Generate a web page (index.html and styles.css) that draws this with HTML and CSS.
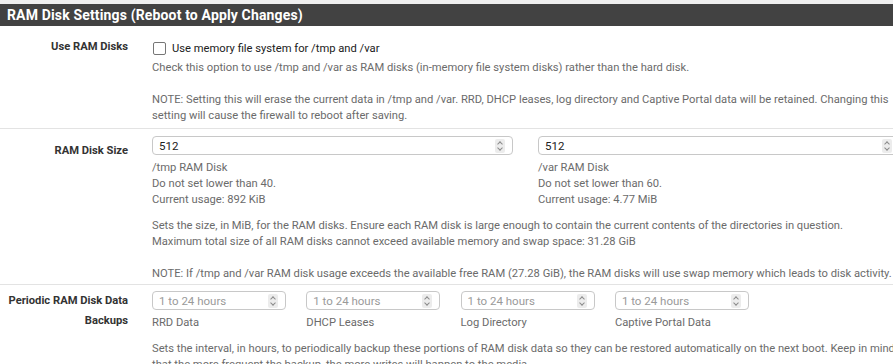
FILE: index.html
```html
<!DOCTYPE html>
<html lang="en">
<head>
  <meta charset="UTF-8" />
  <title>RAM Disk Settings</title>
  <link rel="stylesheet" href="styles.css">
</head>
<body>

  <div class="panel">
    <h2 class="panel-title">RAM Disk Settings (Reboot to Apply Changes)</h2>

    <div class="form-row first">
      <div class="form-label">Use RAM Disks</div>
      <div class="form-field">
        <label class="check"><span class="check-box"></span>Use memory file system for /tmp and /var</label>
        <p class="help">Check this option to use /tmp and /var as RAM disks (in-memory file system disks) rather than the hard disk.<br><br>NOTE: Setting this will erase the current data in /tmp and /var. RRD, DHCP leases, log directory and Captive Portal data will be retained. Changing this setting will cause the firewall to reboot after saving.</p>
      </div>
    </div>

    <div class="form-row sizes">
      <div class="form-label">RAM Disk Size</div>
      <div class="form-field">
        <div class="size-grid">
          <div>
            <div class="num-input"><span class="value">512</span><span class="spin"></span></div>
            <p class="help sub">/tmp RAM Disk<br>Do not set lower than 40.<br>Current usage: 892 KiB</p>
          </div>
          <div>
            <div class="num-input"><span class="value">512</span><span class="spin"></span></div>
            <p class="help sub">/var RAM Disk<br>Do not set lower than 60.<br>Current usage: 4.77 MiB</p>
          </div>
        </div>
        <p class="help block">Sets the size, in MiB, for the RAM disks. Ensure each RAM disk is large enough to contain the current contents of the directories in question.<br>Maximum total size of all RAM disks cannot exceed available memory and swap space: 31.28 GiB<br><br>NOTE: If /tmp and /var RAM disk usage exceeds the available free RAM (27.28 GiB), the RAM disks will use swap memory which leads to disk activity.</p>
      </div>
    </div>

    <div class="form-row">
      <div class="form-label tall">Periodic RAM Disk Data Backups</div>
      <div class="form-field">
        <div class="backup-grid">
          <div>
            <div class="num-input"><span class="placeholder">1 to 24 hours</span><span class="spin"></span></div>
            <p class="help sub">RRD Data</p>
          </div>
          <div>
            <div class="num-input"><span class="placeholder">1 to 24 hours</span><span class="spin"></span></div>
            <p class="help sub">DHCP Leases</p>
          </div>
          <div>
            <div class="num-input"><span class="placeholder">1 to 24 hours</span><span class="spin"></span></div>
            <p class="help sub">Log Directory</p>
          </div>
          <div>
            <div class="num-input"><span class="placeholder">1 to 24 hours</span><span class="spin"></span></div>
            <p class="help sub">Captive Portal Data</p>
          </div>
        </div>
        <p class="help block">Sets the interval, in hours, to periodically backup these portions of RAM disk data so they can be restored automatically on the next boot. Keep in mind that the more frequent the backup, the more writes will happen to the media.</p>
      </div>
    </div>
  </div>

</body>
</html>
```

FILE: styles.css
```css
html, body {
  margin: 0;
  overflow: hidden;
}

body {
  background-color: #efefef;
  color: #212121;
  font-family: Roboto, "Liberation Sans", sans-serif;
  font-size: 11.2px;
  padding-top: 4px;
}

.panel {
  width: 920px;
  background: #fff;
}

.panel-title {
  margin: 0;
  height: 22px;
  line-height: 22px;
  padding-left: 7px;
  background-color: #424242;
  color: #fff;
  font-size: 14px;
  font-weight: 700;
  letter-spacing: 0.15px;
}

.form-row {
  display: flex;
  border-bottom: 1px solid #e3e3e3;
  padding: 7px 0 4px;
}

.form-row.sizes {
  padding-bottom: 2px;
}

.form-label {
  width: 128px;
  flex: none;
  padding-top: 4px;
  text-align: right;
  font-weight: 700;
  line-height: 20px;
  color: #333;
}

.form-row.sizes .form-label {
  padding-top: 5px;
}

.form-label.tall {
  padding-top: 0;
  margin-top: -1px;
}

.form-field {
  flex: 1;
  margin-left: 24px;
  padding-right: 20px;
}

.check {
  display: flex;
  align-items: center;
  height: 20px;
  margin-top: 5px;
  color: #212121;
}

.check-box {
  width: 11px;
  height: 11px;
  border: 1px solid #767676;
  border-radius: 2px;
  margin: 0 6px 0 1px;
}

.help {
  margin: 2px 0 0;
  line-height: 16px;
  color: #6b6b6b;
}

.help.sub {
  margin-top: 5px;
}

.help.block {
  margin-top: 10px;
}

.size-grid {
  display: grid;
  grid-template-columns: 361px 362px;
  gap: 25px;
}

.backup-grid {
  display: grid;
  grid-template-columns: repeat(4, 134px);
  column-gap: 20.3px;
  margin-top: -1px;
}

.num-input {
  display: flex;
  align-items: center;
  justify-content: space-between;
  height: 17px;
  border: 1px solid #c8c8c8;
  border-radius: 4px;
  padding: 0 7px 0 6px;
  font-size: 11.5px;
}

.value {
  color: #212121;
}

.placeholder {
  color: #9a9a9a;
}

.spin {
  width: 10px;
  height: 14px;
  border-radius: 2px;
  background: #ececec;
  position: relative;
}

.spin::before,
.spin::after {
  content: "";
  position: absolute;
  left: 3px;
  width: 3px;
  height: 3px;
  border-left: 1px solid #8a8a8a;
  border-top: 1px solid #8a8a8a;
}

.spin::before {
  top: 3px;
  transform: rotate(45deg);
}

.spin::after {
  top: 7px;
  transform: rotate(225deg);
}
```
